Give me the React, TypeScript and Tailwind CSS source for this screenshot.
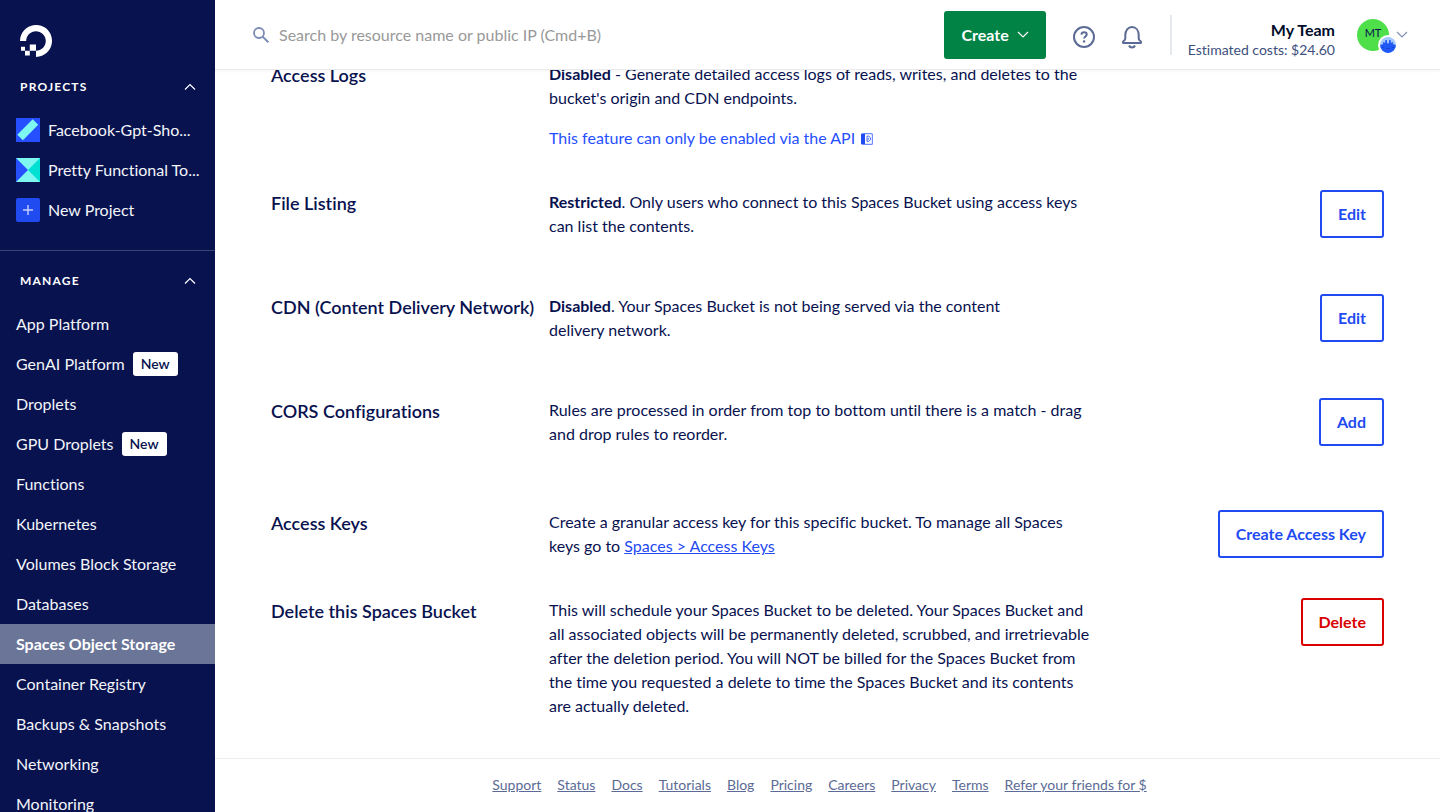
import type { ReactNode } from "react";

function ChevronUp() {
  return (
    <svg width="12" height="8" viewBox="0 0 12 8" fill="none" stroke="currentColor" strokeWidth="1.2" aria-hidden="true">
      <path d="M1 6.500 6 1.500l5 5" />
    </svg>
  );
}

function ChevronDown() {
  return (
    <svg width="12" height="8" viewBox="0 0 12 8" fill="none" stroke="currentColor" strokeWidth="1.2" aria-hidden="true">
      <path d="m1 1 5 5 5-5" />
    </svg>
  );
}

function Logo() {
  return (
    <svg width="32" height="32" viewBox="0 0 32 32" aria-hidden="true">
      <path d="M16 32v-6.2c6.6 0 11.6-6.5 9.1-13.4a9.4 9.4 0 0 0-5.5-5.5C12.7 4.4 6.2 9.4 6.2 16H0C0 5.5 10.1-2.7 21.1.8c4.8 1.5 8.6 5.3 10.1 10.1C34.7 21.9 26.5 32 16 32z" fill="#fff" />
      <path d="M16 25.8H9.8V19.600H16zM9.8 30.600H5v-4.800h4.800zM5 25.800H1v-4h4z" fill="#fff" />
    </svg>
  );
}

function StripeIcon() {
  return (
    <svg width="24" height="24" viewBox="0 0 24 24" className="shrink-0" aria-hidden="true">
      <path fill="#2650ff" d="M0 0h24v24H0z" />
      <path fill="#7ef7f0" d="m16.700 1.200 5.500 5.500L6.900 22.300 1.300 16.800z" />
    </svg>
  );
}

function TrianglesIcon() {
  return (
    <svg width="24" height="24" viewBox="0 0 24 24" className="shrink-0" aria-hidden="true">
      <path fill="#7ef7f0" d="M0 0h24v24H0z" />
      <path fill="#2650ff" d="m0 0 12 12L0 24z" />
      <path fill="#00e0d3" d="M24 0 12 12l12 12z" />
    </svg>
  );
}

function PlusIcon() {
  return (
    <svg width="24" height="24" viewBox="0 0 24 24" className="shrink-0" aria-hidden="true">
      <rect width="24" height="24" rx="2" fill="#1f4bf0" />
      <path d="M12 7v10M7 12h10" stroke="#c5d0ff" strokeWidth="1.4" />
    </svg>
  );
}

function SearchIcon() {
  return (
    <svg width="16" height="16" viewBox="0 0 16 16" fill="none" stroke="#7d8cb5" aria-hidden="true">
      <circle cx="6" cy="6" r="5" strokeWidth="1.8" />
      <path d="m9.600 9.600 5.700 5.700" strokeWidth="2" />
    </svg>
  );
}

function HelpIcon() {
  return (
    <svg width="22" height="22" viewBox="0 0 22 22" fill="none" stroke="#5b6b95" strokeWidth="2" aria-hidden="true">
      <circle cx="11" cy="11" r="10" />
      <path d="M8.400 8.600c.2-1.500 1.200-2.300 2.700-2.300s2.600.9 2.600 2.200c0 2-2.600 2-2.600 4.100" />
      <path d="M11.100 14.400v2.100" strokeWidth="2.200" />
    </svg>
  );
}

function BellIcon() {
  return (
    <svg width="22" height="24" viewBox="0 0 22 24" fill="none" stroke="#5b6b95" strokeWidth="2" strokeLinejoin="round" aria-hidden="true">
      <path d="M4.300 10.200C4.300 5.400 7 2 11 2s6.700 3.400 6.700 8.200v3.200c0 1.200.6 1.800 1.700 2.700.9.700 1 2-.2 2H2.800c-1.200 0-1.100-1.300-.2-2 1.100-.9 1.700-1.500 1.700-2.700z" />
      <path d="M8 20.500c.5 1.200 1.600 1.900 3 1.900s2.500-.7 3-1.900" />
    </svg>
  );
}

function ApiDocIcon() {
  return (
    <svg width="12" height="12" viewBox="0 0 12 12" className="ml-1.5 inline-block align-[-1px]" aria-hidden="true">
      <rect x=".6" y=".6" width="10.800" height="10.800" rx="1" fill="#fff" stroke="#6f8cff" strokeWidth="1.200" />
      <path d="M0 1h4v10H0z" fill="#1f4bf0" />
      <path d="M6 3.200h1.800l1.700 1.600v1.800L7.800 8.400H6zM7.300 5v1.800" fill="none" stroke="#3d66f7" strokeWidth="1" />
    </svg>
  );
}

function TeamBadge() {
  return (
    <svg width="20" height="20" viewBox="0 0 20 20" className="absolute -right-[9px] -bottom-1" aria-hidden="true">
      <circle cx="10" cy="10" r="10" fill="#fff" />
      <circle cx="10" cy="10" r="8" fill="#a5c8ff" />
      <path d="M2.100 10.600c1-1.500 2.300-.8 3.200-1.600L4.800 7.400l1.300-.5 1 1.700.3-3.600h1.400l.3 3.200h1.800l.3-3.200h1.400l.3 3.600 1-1.700 1.300.5L14.700 9c.9.800 2.200.1 3.200 1.600A8 8 0 0 1 10 18a8 8 0 0 1-7.900-7.400z" fill="#1f57f5" />
      <path d="M4 12.500h2M14 12.500h2M8 13.500h4" stroke="#1744d8" strokeWidth="1" />
    </svg>
  );
}

function SectionHeading({ children }: { children: ReactNode }) {
  return (
    <button type="button" className="flex w-full items-center justify-between pt-[18px] pr-[19px] pb-[11px] pl-5 text-xs leading-6 font-bold tracking-widest text-white uppercase">
      {children}
      <ChevronUp />
    </button>
  );
}

const projects = [
  { name: "Facebook-Gpt-Sho...", icon: <StripeIcon /> },
  { name: "Pretty Functional To...", icon: <TrianglesIcon /> },
  { name: "New Project", icon: <PlusIcon /> },
];

const services: { name: string; isNew?: boolean; active?: boolean }[] = [
  { name: "App Platform" },
  { name: "GenAI Platform", isNew: true },
  { name: "Droplets" },
  { name: "GPU Droplets", isNew: true },
  { name: "Functions" },
  { name: "Kubernetes" },
  { name: "Volumes Block Storage" },
  { name: "Databases" },
  { name: "Spaces Object Storage", active: true },
  { name: "Container Registry" },
  { name: "Backups & Snapshots" },
  { name: "Networking" },
  { name: "Monitoring" },
];

function Sidebar() {
  return (
    <aside className="sticky top-0 h-screen w-[215px] shrink-0 overflow-hidden bg-[#08124f] text-[#f3f5f9]">
      <a href="#home" aria-label="Home" className="block pt-[25px] pl-5">
        <Logo />
      </a>
      <nav aria-label="Projects" className="border-b border-[#3b4474] pb-5">
        <SectionHeading>Projects</SectionHeading>
        <ul>
          {projects.map((p) => (
            <li key={p.name}>
              <a href="#project" className="flex h-10 items-center gap-2 pl-4 whitespace-nowrap">
                {p.icon}
                {p.name}
              </a>
            </li>
          ))}
        </ul>
      </nav>
      <nav aria-label="Manage">
        <SectionHeading>Manage</SectionHeading>
        <ul>
          {services.map((s) => (
            <li key={s.name}>
              <a
                href="#service"
                className={`flex h-10 items-center gap-2 pl-4 whitespace-nowrap ${s.active ? "bg-[#6a7598] font-bold text-white" : ""}`}
              >
                {s.name}
                {s.isNew && (
                  <span className="rounded-[3px] bg-white px-2 text-sm leading-6 font-semibold text-[#08124f]">New</span>
                )}
              </a>
            </li>
          ))}
        </ul>
      </nav>
    </aside>
  );
}

function Header() {
  return (
    <header className="sticky top-0 z-10 flex h-[70px] items-start border-b border-[#ececee] bg-white pr-8 pl-[38px] shadow-[0_1px_3px_rgba(0,0,0,0.05)]">
      <label className="mt-[23px] flex flex-1 items-center gap-2.5">
        <SearchIcon />
        <input
          type="text"
          aria-label="Search"
          placeholder="Search by resource name or public IP (Cmd+B)"
          className="h-6 flex-1 bg-transparent outline-none placeholder:text-[#999]"
        />
      </label>
      <button type="button" className="mt-[11px] flex h-12 items-center gap-2 rounded-[3px] bg-[#008344] px-[17px] font-bold text-white">
        Create
        <ChevronDown />
      </button>
      <button type="button" aria-label="Help" className="mt-[26px] ml-[27px]">
        <HelpIcon />
      </button>
      <button type="button" aria-label="Notifications" className="mt-[25px] ml-[26px]">
        <BellIcon />
      </button>
      <div className="mt-[15px] ml-[27px] h-10 w-0.5 bg-[#e5e8ed]" />
      <div className="mt-5 ml-4 text-right">
        <p className="leading-5 font-bold text-[#000c2a]">My Team</p>
        <p className="text-sm leading-5 text-[#3d4f7c]">Estimated costs: $24.60</p>
      </div>
      <button type="button" aria-label="Account" className="mt-[19px] ml-[22px] flex items-center gap-[7px] text-[#8290b5]">
        <span className="relative flex size-8 items-center justify-center rounded-full bg-[#4edf4a] pb-1 text-[11px] text-[#08124f]">
          MT
          <TeamBadge />
        </span>
        <ChevronDown />
      </button>
    </header>
  );
}

function OutlineButton({ children, danger }: { children: ReactNode; danger?: boolean }) {
  return (
    <button
      type="button"
      className={`h-12 rounded-[3px] border-2 px-4 font-bold whitespace-nowrap ${danger ? "border-[#d90000] text-[#d90000]" : "border-[#1f4bf0] text-[#1f4bf0]"}`}
    >
      {children}
    </button>
  );
}

function Setting({ title, gap, action, children }: { title: string; gap: string; action?: ReactNode; children: ReactNode }) {
  return (
    <section className={`grid grid-cols-[278px_1fr_auto] items-start ${gap}`}>
      <h2 className="pt-px text-lg leading-6 font-semibold whitespace-nowrap">{title}</h2>
      <div className="leading-6">{children}</div>
      {action}
    </section>
  );
}

const footerLinks = ["Support", "Status", "Docs", "Tutorials", "Blog", "Pricing", "Careers", "Privacy", "Terms", "Refer your friends for $"];

export default function App() {
  return (
    <div className="flex min-h-screen bg-white font-['Lato',sans-serif] text-base text-[#08124f] [font-variant-ligatures:none]">
      <Sidebar />
      <div className="flex min-w-0 flex-1 flex-col">
        <Header />
        <main className="-mt-2 flex-1 px-14">
          <Setting title="Access Logs" gap="mb-10">
            <p>
              <strong className="font-bold">Disabled</strong> - Generate detailed access logs of reads, writes, and deletes to the
              <br />
              bucket's origin and CDN endpoints.
            </p>
            <p className="mt-4">
              <a href="#api" className="text-[#2650ff]">
                This feature can only be enabled via the API
                <ApiDocIcon />
              </a>
            </p>
          </Setting>
          <Setting title="File Listing" gap="mb-14" action={<OutlineButton>Edit</OutlineButton>}>
            <strong className="font-bold">Restricted</strong>. Only users who connect to this Spaces Bucket using access keys
            <br />
            can list the contents.
          </Setting>
          <Setting title="CDN (Content Delivery Network)" gap="mb-14" action={<OutlineButton>Edit</OutlineButton>}>
            <strong className="font-bold">Disabled</strong>. Your Spaces Bucket is not being served via the content
            <br />
            delivery network.
          </Setting>
          <Setting title="CORS Configurations" gap="mb-16" action={<OutlineButton>Add</OutlineButton>}>
            Rules are processed in order from top to bottom until there is a match - drag
            <br />
            and drop rules to reorder.
          </Setting>
          <Setting title="Access Keys" gap="mb-10" action={<OutlineButton>Create Access Key</OutlineButton>}>
            Create a granular access key for this specific bucket. To manage all Spaces
            <br />
            keys go to{" "}
            <a href="#keys" className="text-[#1f4bf0] underline">
              Spaces &gt; Access Keys
            </a>
          </Setting>
          <Setting title="Delete this Spaces Bucket" gap="mb-10" action={<OutlineButton danger>Delete</OutlineButton>}>
            This will schedule your Spaces Bucket to be deleted. Your Spaces Bucket and
            <br />
            all associated objects will be permanently deleted, scrubbed, and irretrievable
            <br />
            after the deletion period. You will NOT be billed for the Spaces Bucket from
            <br />
            the time you requested a delete to time the Spaces Bucket and its contents
            <br />
            are actually deleted.
          </Setting>
        </main>
        <footer className="border-t border-[#ececee] pt-4 pr-4 pb-[17px]">
          <ul className="flex flex-wrap justify-center gap-x-4 text-sm leading-5 text-[#5b6b95]">
            {footerLinks.map((l) => (
              <li key={l}>
                <a href="#footer" className="underline">
                  {l}
                </a>
              </li>
            ))}
          </ul>
        </footer>
      </div>
    </div>
  );
}
